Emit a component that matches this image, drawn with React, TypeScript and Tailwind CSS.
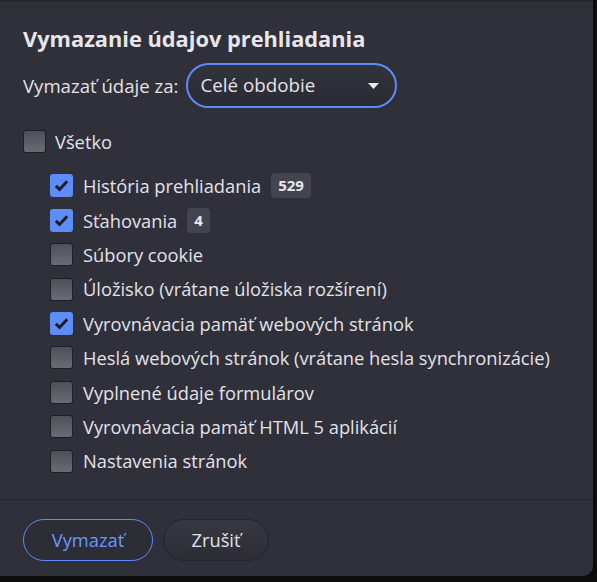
import React, { useState } from 'react';

type Item = { label: string; checked: boolean; badge?: string };

const initialItems: Item[] = [
  { label: 'História prehliadania', checked: true, badge: '529' },
  { label: 'Sťahovania', checked: true, badge: '4' },
  { label: 'Súbory cookie', checked: false },
  { label: 'Úložisko (vrátane úložiska rozšírení)', checked: false },
  { label: 'Vyrovnávacia pamäť webových stránok', checked: true },
  { label: 'Heslá webových stránok (vrátane hesla synchronizácie)', checked: false },
  { label: 'Vyplnené údaje formulárov', checked: false },
  { label: 'Vyrovnávacia pamäť HTML 5 aplikácií', checked: false },
  { label: 'Nastavenia stránok', checked: false },
];

const Box: React.FC<{ checked: boolean }> = ({ checked }) =>
  checked ? (
    <span className="flex h-[23px] w-[23px] shrink-0 items-center justify-center rounded-[3px] bg-[#5c8dfb]">
      <svg width="15" height="13" viewBox="0 0 15 13">
        <path d="M1.8 6.8 L5.6 10.4 L13.2 2.2" fill="none" stroke="#1e1e24" strokeWidth="3" />
      </svg>
    </span>
  ) : (
    <span className="h-[23px] w-[23px] shrink-0 rounded-[3px] border border-[#1e1e23] bg-gradient-to-b from-[#4f4f58] to-[#6b6b75]" />
  );

export default function App() {
  const [items, setItems] = useState(initialItems);
  const [all, setAll] = useState(false);

  return (
    <div
      className="h-[582px] w-[597px] overflow-hidden bg-[#0c0d0c]"
      style={{ fontFamily: '"Open Sans", "Noto Sans", sans-serif' }}
    >
      <div className="flex h-[576px] w-[593px] flex-col rounded-br-[10px] border-t-2 border-[#26262c] bg-[#30303a] text-[#e2e2e8]">
        <div className="flex flex-1 flex-col px-[23px] pt-[22px]">
          <h1 className="text-[21.8px] font-bold leading-[30px] text-[#e6e6ec]">
            Vymazanie údajov prehliadania
          </h1>

          <div className="mt-[9px] flex items-center gap-[8px]">
            <span className="text-[18.6px]">Vymazať údaje za:</span>
            <button className="flex h-[45px] w-[211px] items-center justify-between rounded-full border-2 border-[#5c8cf9] bg-gradient-to-b from-[#33333d] to-[#2a2a33] pl-[12px] pr-[16px] text-[18.8px] text-[#e2e2e8]">
              <span>Celé obdobie</span>
              <svg width="11" height="6" viewBox="0 0 11 6">
                <path d="M0 0 H11 L5.5 6 Z" fill="#e8e8ee" />
              </svg>
            </button>
          </div>

          <label
            className="mt-[20px] flex cursor-pointer items-center gap-[9px] text-[18.3px]"
            onClick={() => setAll(!all)}
          >
            <Box checked={all} />
            <span>Všetko</span>
          </label>

          <div className="mt-[19px] flex flex-col gap-[11.4px] pl-[27px]">
            {items.map((it, i) => (
              <label
                key={it.label}
                className="flex h-[23px] cursor-pointer items-center gap-[10px] text-[18.3px]"
                onClick={() =>
                  setItems(items.map((x, j) => (j === i ? { ...x, checked: !x.checked } : x)))
                }
              >
                <Box checked={it.checked} />
                <span className="whitespace-nowrap">{it.label}</span>
                {it.badge && (
                  <span className="rounded-[4px] bg-[#44444e] px-[7px] text-[15px] font-bold leading-[25px] text-[#e8e8ee]">
                    {it.badge}
                  </span>
                )}
              </label>
            ))}
          </div>
        </div>

        <div className="flex h-[77px] items-start gap-[10px] border-t border-[#26262c] px-[23px] pt-[19px]">
          <button className="h-[42px] w-[130px] rounded-full border border-[#5c8cf9] bg-[#2d2d36] text-[18.3px] text-[#6a97ff]">
            Vymazať
          </button>
          <button className="h-[42px] w-[106px] rounded-full border border-[#24242a] bg-gradient-to-b from-[#383842] to-[#2c2c35] text-[18.3px] text-[#e2e2e8]">
            Zrušiť
          </button>
        </div>
      </div>
    </div>
  );
}
